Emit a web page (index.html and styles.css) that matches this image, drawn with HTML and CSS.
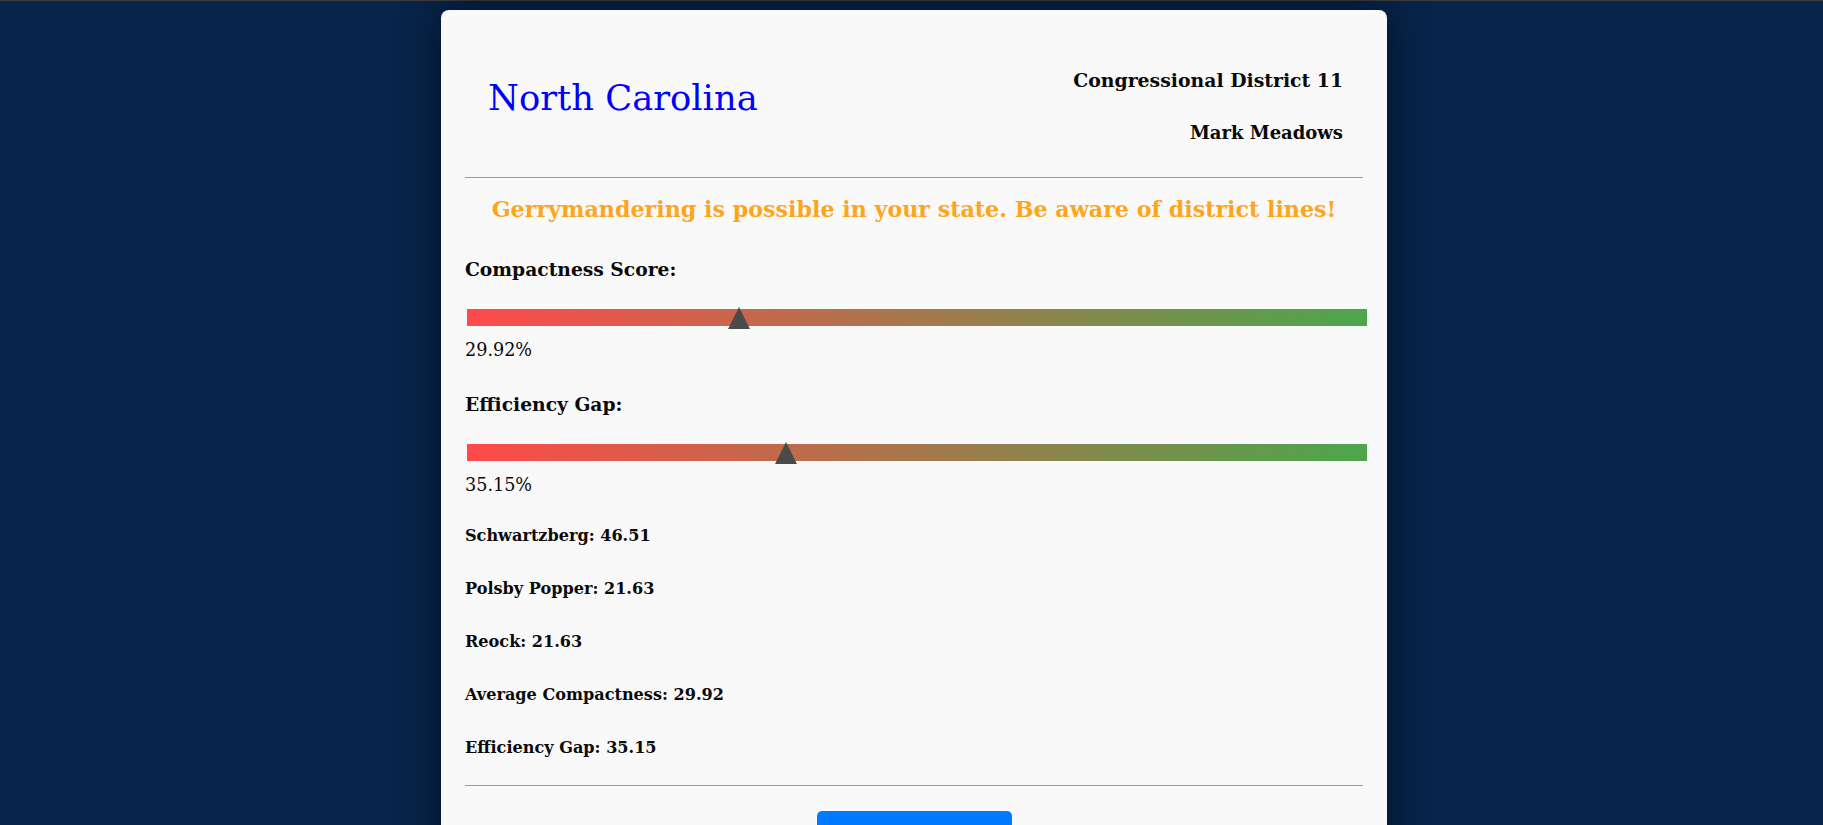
FILE: index.html
```html
<!DOCTYPE html>
<html lang="en">
<head>
<meta charset="utf-8">
<title>District Report</title>
<link rel="stylesheet" href="styles.css">
</head>
<body>
<div class="topline"></div>
<div class="page">
  <main class="card">
    <header class="header">
      <h1 class="state">North Carolina</h1>
      <div class="district-info">
        <h3 class="district">Congressional District 11</h3>
        <h4 class="rep">Mark Meadows</h4>
      </div>
    </header>
    <hr class="rule">
    <h4 class="warning">Gerrymandering is possible in your state. Be aware of district lines!</h4>

    <h5 class="label">Compactness Score:</h5>
    <div class="scale">
      <div class="marker" style="left: calc(29.92% - 8px)"></div>
    </div>
    <p class="pct">29.92%</p>

    <h5 class="label">Efficiency Gap:</h5>
    <div class="scale">
      <div class="marker" style="left: calc(35.15% - 8px)"></div>
    </div>
    <p class="pct">35.15%</p>

    <ul class="stats">
      <li class="stat">Schwartzberg: 46.51</li>
      <li class="stat">Polsby Popper: 21.63</li>
      <li class="stat">Reock: 21.63</li>
      <li class="stat">Average Compactness: 29.92</li>
      <li class="stat">Efficiency Gap: 35.15</li>
    </ul>
    <hr class="rule rule-bottom">
    <div class="actions">
      <button class="btn" aria-label="Back to map"></button>
    </div>
  </main>
</div>
</body>
</html>
```
FILE: styles.css
```css
html, body {
  margin: 0;
  padding: 0;
  overflow: hidden;
  height: 825px;
}
body {
  background: #07244a;
  font-family: "DejaVu Serif", "Liberation Serif", serif;
  color: #0a0a0a;
}
.topline {
  height: 1px;
  background: #3a3a38;
}
.page {
  display: flex;
  justify-content: center;
  padding-left: 5px;
}
.card {
  box-sizing: border-box;
  width: 946px;
  margin-top: 9px;
  padding: 0 24px 40px;
  background: #f9f9f9;
  border-radius: 8px;
  box-shadow: 0 0 40px rgba(0, 0, 0, 0.55);
}
.header {
  display: flex;
  justify-content: space-between;
  align-items: flex-start;
  padding-top: 58px;
}
.state {
  margin: 8px 0 0 23px;
  font-size: 35.3px;
  line-height: 44px;
  font-weight: 400;
  color: #0000ff;
}
.district-info {
  text-align: right;
  padding-right: 20px;
}
.district {
  margin: 0;
  font-size: 18.85px;
  line-height: 24px;
  font-weight: 700;
}
.rep {
  margin: 29px 0 0;
  font-size: 18px;
  line-height: 24px;
  font-weight: 700;
}
.rule {
  margin: 32px 0 0;
  border: 0;
  border-top: 1px solid #9c9c9c;
  height: 0;
}
.warning {
  margin: 17px 0 0;
  text-align: center;
  font-size: 22.2px;
  line-height: 29px;
  font-weight: 700;
  color: #ffa51a;
}
.label {
  margin: 33px 0 0;
  font-size: 18.7px;
  line-height: 24px;
  font-weight: 700;
}
.scale {
  position: relative;
  width: 900px;
  height: 17px;
  margin: 28px 0 0 2px;
  background: linear-gradient(to right, #ff4a4a, #4ca64c);
}
.marker {
  position: absolute;
  top: -2px;
  width: 0;
  height: 0;
  border-left: 11px solid transparent;
  border-right: 11px solid transparent;
  border-bottom: 22px solid #4a4a4a;
}
.pct {
  margin: 13px 0 0;
  font-size: 17.6px;
  line-height: 22px;
}
.pct + .label {
  margin-top: 31px;
}
.stats {
  list-style: none;
  margin: 30px 0 0;
  padding: 0;
  display: flex;
  flex-direction: column;
  gap: 33px;
}
.stat {
  font-size: 16.1px;
  line-height: 20px;
  font-weight: 700;
}
.rule-bottom {
  margin-top: 27px;
}
.actions {
  display: flex;
  justify-content: center;
  padding-top: 25px;
}
.btn {
  width: 195px;
  height: 38px;
  padding: 0;
  border: 0;
  border-radius: 5px;
  background: #007bff;
}
```
